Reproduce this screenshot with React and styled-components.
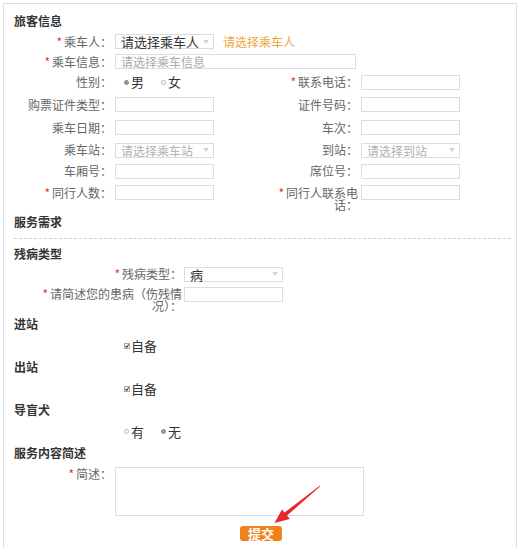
import styled, { createGlobalStyle } from "styled-components";

const GlobalStyle = createGlobalStyle`
  html, body { margin: 0; padding: 0; background: #fff; }
  body {
    font-family: "Noto Sans CJK SC", "Noto Sans", sans-serif;
    font-size: 12px;
    color: #666;
  }
`;

const Page = styled.div`
  position: relative;
  width: 517px;
  height: 548px;
  overflow: hidden;
`;

const Panel = styled.div`
  box-sizing: border-box;
  margin: 3px 0 0 3px;
  width: 514px;
  min-height: 580px;
  border: 1px solid #dcdcdc;
  border-bottom: none;
  padding: 8px 5px 0 10px;
`;

const Heading = styled.div`
  height: 18px;
  line-height: 18px;
  font-size: 12px;
  font-weight: bold;
  color: #333;
  margin-top: ${(p) => p.$mt || 0}px;
`;

const FormGrid = styled.div`
  display: grid;
  grid-template-columns: 98px 156px 84px 99px;
  grid-template-rows: 21px 19px 22px 23px 23px 22px 20px 23px;
  column-gap: 3px;
  align-items: center;
  margin-top: 1px;
`;

const Label = styled.div`
  box-sizing: border-box;
  text-align: right;
  line-height: 12px;
  color: #666;
  white-space: normal;
  ${(p) => p.$w && `width: ${p.$w}px; flex: none;`}
  ${(p) => p.$indent && `margin-left: ${p.$indent}px;`}
  ${(p) => p.$top && `align-self: start; padding-top: ${p.$top}px;`}
`;

const Req = styled.span`
  color: #d9372b;
  margin-right: 2px;
`;

const Wide = styled.div`
  grid-column: 2 / -1;
  display: flex;
  align-items: center;
`;

const Input = styled.div`
  box-sizing: border-box;
  width: ${(p) => p.$w || 99}px;
  height: ${(p) => p.$h || 15}px;
  border: 1px solid #dddddd;
  background: #fff;
  padding-left: 5px;
  line-height: 13px;
  font-size: 12px;
  color: #aaa;
  flex: none;
`;

const Select = styled.div`
  box-sizing: border-box;
  display: flex;
  align-items: center;
  width: ${(p) => p.$w || 99}px;
  height: 15px;
  border: 1px solid #dddddd;
  padding: 0 4px 0 5px;
  font-size: ${(p) => (p.$muted ? 12 : 13)}px;
  color: ${(p) => (p.$muted ? "#b0b0b0" : "#333")};
  line-height: 13px;
  flex: none;

  &::after {
    content: "";
    margin-left: auto;
    border-left: 3.5px solid transparent;
    border-right: 3.5px solid transparent;
    border-top: 4px solid #d4d4d4;
  }
`;

const Hint = styled.span`
  margin-left: 9px;
  color: #f0a53c;
  font-size: 12px;
`;

const Options = styled.div`
  display: flex;
  align-items: center;
  padding-left: 9px;
`;

const Option = styled.span`
  display: flex;
  align-items: center;
  margin-right: 17px;
  font-size: 13px;
  line-height: 14px;
  color: #333;
`;

const Dot = styled.span`
  box-sizing: border-box;
  width: 5px;
  height: 5px;
  border-radius: 50%;
  margin-right: 2px;
  border: 1px solid ${(p) => (p.$on ? "#8a8a8a" : "#b5b5b5")};
  background: ${(p) => (p.$on ? "#9a9a9a" : "#fff")};
`;

const Check = styled.svg`
  width: 6px;
  height: 6px;
  margin-right: 1px;
`;

const OptionRow = styled.div`
  display: grid;
  grid-template-columns: 98px 1fr;
  column-gap: 3px;
  align-items: center;
  height: 25px;
`;

const Divider = styled.div`
  margin-top: 7px;
  border-top: 1px dashed #cfcfcf;
`;

const PairRow = styled.div`
  box-sizing: border-box;
  display: flex;
  align-items: ${(p) => (p.$start ? "flex-start" : "center")};
  column-gap: 2px;
  height: ${(p) => p.$h}px;
  padding-top: ${(p) => p.$pt || 0}px;
`;

const TextRow = styled.div`
  display: flex;
  align-items: flex-start;
  column-gap: 3px;
  margin-top: 5px;
`;

const ButtonRow = styled.div`
  padding-left: 226px;
  margin-top: 10px;
`;

const Submit = styled.button`
  display: block;
  width: 42px;
  height: 15px;
  padding: 0;
  border: none;
  border-radius: 3px;
  background: #f0821e;
  color: #fff;
  font-family: inherit;
  font-size: 13px;
  font-weight: bold;
  line-height: 15px;
`;

const Arrow = styled.svg`
  position: absolute;
  left: 0;
  top: 0;
  pointer-events: none;
`;

function Radio({ on, children }) {
  return (
    <Option>
      <Dot $on={on} />
      {children}
    </Option>
  );
}

function Tick({ children }) {
  return (
    <Option>
      <Check viewBox="0 0 6 6">
        <rect x="0.5" y="0.5" width="5" height="5" fill="#fff" stroke="#a8a8a8" />
        <polyline points="1.4,3 2.6,4.3 4.7,1.5" fill="none" stroke="#333" strokeWidth="1.1" />
      </Check>
      {children}
    </Option>
  );
}

function Lbl({ req, children, ...rest }) {
  return (
    <Label {...rest}>
      {req && <Req>*</Req>}
      {children}
    </Label>
  );
}

export default function App() {
  return (
    <Page>
      <GlobalStyle />
      <Panel>
        <Heading>旅客信息</Heading>
        <FormGrid>
          <Lbl req>乘车人：</Lbl>
          <Wide>
            <Select>请选择乘车人</Select>
            <Hint>请选择乘车人</Hint>
          </Wide>

          <Lbl req>乘车信息：</Lbl>
          <Wide>
            <Input $w={241}>请选择乘车信息</Input>
          </Wide>

          <Lbl>性别：</Lbl>
          <Options>
            <Radio on>男</Radio>
            <Radio>女</Radio>
          </Options>
          <Lbl req>联系电话：</Lbl>
          <Input />

          <Lbl>购票证件类型：</Lbl>
          <Input />
          <Lbl>证件号码：</Lbl>
          <Input />

          <Lbl>乘车日期：</Lbl>
          <Input />
          <Lbl>车次：</Lbl>
          <Input />

          <Lbl>乘车站：</Lbl>
          <Select $muted>请选择乘车站</Select>
          <Lbl>到站：</Lbl>
          <Select $muted>请选择到站</Select>

          <Lbl>车厢号：</Lbl>
          <Input />
          <Lbl>席位号：</Lbl>
          <Input />

          <Lbl req>同行人数：</Lbl>
          <Input />
          <Lbl req $top={6}>同行人联系电话：</Lbl>
          <Input />
        </FormGrid>

        <Heading $mt={9}>服务需求</Heading>
        <Divider />

        <Heading $mt={6}>残病类型</Heading>
        <PairRow $h={22}>
          <Lbl req $w={168}>残病类型：</Lbl>
          <Select>病</Select>
        </PairRow>
        <PairRow $h={28} $pt={2} $start>
          <Lbl req $w={144} $indent={24} $top={1}>请简述您的患病（伤残情况）：</Lbl>
          <Input />
        </PairRow>

        <Heading $mt={2}>进站</Heading>
        <OptionRow>
          <span />
          <Options>
            <Tick>自备</Tick>
          </Options>
        </OptionRow>

        <Heading>出站</Heading>
        <OptionRow>
          <span />
          <Options>
            <Tick>自备</Tick>
          </Options>
        </OptionRow>

        <Heading>导盲犬</Heading>
        <OptionRow>
          <span />
          <Options>
            <Radio>有</Radio>
            <Radio on>无</Radio>
          </Options>
        </OptionRow>

        <Heading>服务内容简述</Heading>
        <TextRow>
          <Lbl req $w={98} $top={1}>简述：</Lbl>
          <Input $w={249} $h={49} />
        </TextRow>

        <ButtonRow>
          <Submit type="button">提交</Submit>
        </ButtonRow>
      </Panel>

      <Arrow width="517" height="548" viewBox="0 0 517 548">
        <polygon
          points="320.3,486.3 287,515.6 289.8,519 274.5,523 282,509.4 284.6,512.6 319.7,485.7"
          fill="#e8262b"
        />
      </Arrow>
    </Page>
  );
}
